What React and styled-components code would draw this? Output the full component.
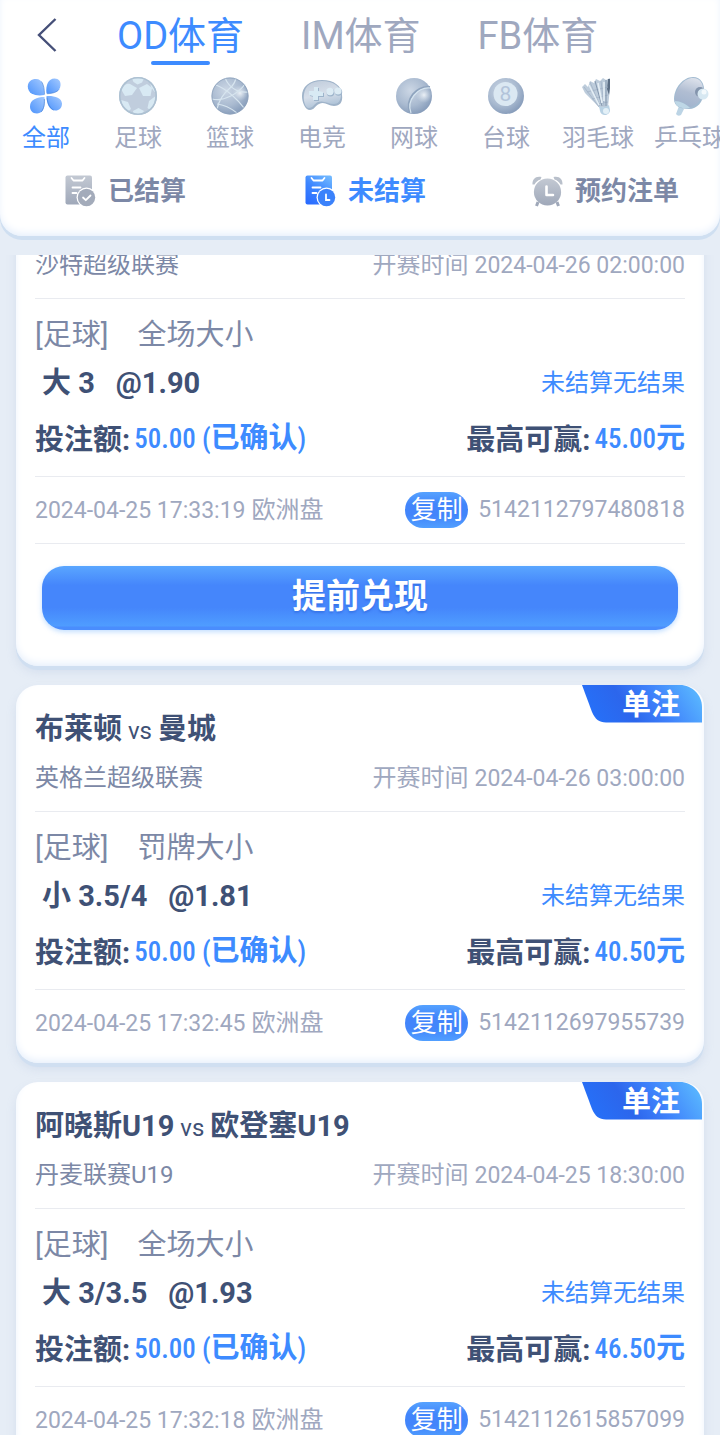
import React, { useLayoutEffect, useRef, useState } from 'react';
import styled, { createGlobalStyle } from 'styled-components';

const GlobalStyle = createGlobalStyle`
  * {
    box-sizing: border-box;
  }

  body {
    margin: 0;
    background-color: #e6edf6;
    font-family: Roboto, 'Noto Sans CJK SC', sans-serif;
    line-height: 40px;
  }

  button {
    font-family: inherit;
    border: none;
    padding: 0;
    background: none;
    cursor: pointer;
  }
`;

const Page = styled.div`
  display: flex;
  flex-direction: column;
  height: 100vh;
`;

const Header = styled.header`
  flex: none;
  padding-bottom: 20px;
  background-color: #fff;
  border-radius: 0 0 22px 22px;
  box-shadow: 0 4px 0 #cfdff1, inset 0 -4px 8px -2px #e3edfb;
`;

const TopBar = styled.div`
  display: flex;
  align-items: center;
  height: 72px;
`;

const BackButton = styled.button`
  display: flex;
  justify-content: center;
  width: 62px;
  margin: 0 22px 0 16px;
`;

const Providers = styled.nav`
  display: flex;
  gap: 57px;
  padding-left: 17px;
`;

const ProviderTab = styled.button`
  display: flex;
  flex-direction: column;
  align-items: center;
  padding-top: 2px;
  color: ${props => props.$active ? '#3d8bff' : '#9fa8bf'};
  font-size: 38px;
  line-height: 54px;
  white-space: nowrap;

  &::after {
    content: '';
    width: 59px;
    height: 4px;
    margin-top: -2px;
    border-radius: 2px;
    background-color: ${props => props.$active ? '#3d8bff' : 'transparent'};
  }
`;

const Sports = styled.nav`
  display: flex;
  overflow: hidden;
`;

const SportTab = styled.button`
  display: flex;
  flex: none;
  flex-direction: column;
  align-items: center;
  width: 92px;
  padding-top: 3px;
  color: ${props => props.$active ? '#3d8bff' : '#9fa8bf'};
  font-size: 24px;
  line-height: 42px;
  white-space: nowrap;
`;

const Statuses = styled.nav`
  display: grid;
  grid-template-columns: repeat(3, 1fr);
  margin-top: 7px;
`;

const StatusTab = styled.button`
  display: flex;
  align-items: center;
  justify-content: center;
  gap: 12px;
  height: 50px;
  padding-left: 11px;
  color: ${props => props.$active ? '#3d8bff' : '#7c88a6'};
  font-size: 26px;
  font-weight: 700;
  line-height: 42px;
`;

const BetList = styled.main`
  display: flex;
  flex: 1;
  flex-direction: column;
  gap: 19px;
  min-height: 0;
  margin-top: 19px;
  padding: 0 16px;
  overflow-y: auto;
  scrollbar-width: none;

  &::after {
    content: '';
    flex: none;
    height: 1px;
  }
`;

const Card = styled.article`
  position: relative;
  flex: none;
  padding: 18px 19px ${props => props.$cashOut ? '36px' : '7px'};
  background-color: #fff;
  border-radius: 22px;
  box-shadow: 0 4px 0 #d0dff1, 0 6px 10px rgba(160, 180, 215, 0.25), inset 0 -4px 8px -2px #e3edfb;
`;

const Ribbon = styled.div`
  position: absolute;
  top: 0;
  right: 2px;
  width: 120px;
  height: 38px;
  padding-left: 18px;
  color: #fff;
  font-size: 29px;
  font-weight: 700;
  text-align: center;

  svg {
    position: absolute;
    top: 0;
    left: 0;
  }

  span {
    position: relative;
  }
`;

const Section = styled.section`
  padding: ${props => props.$top || '0'} 0 ${props => props.$bottom || '0'};
  border-bottom: ${props => props.$last ? 'none' : '1px solid #e9ebf0'};
`;

const Row = styled.div`
  display: flex;
  align-items: center;
  justify-content: space-between;
  height: ${props => props.$height || '50px'};
  white-space: nowrap;
`;

const Teams = styled.h2`
  margin: 0;
  padding-top: 4px;
  color: #3f5175;
  font-size: 29px;
  font-weight: 700;

  small {
    font-size: 24px;
    font-weight: 400;
  }
`;

const League = styled.span`
  color: #7c88a6;
  font-size: 24px;
`;

const Muted = styled.span`
  color: #9fa8bf;
  font-size: 24px;

  time {
    font-size: 23px;
  }
`;

const OrderNumber = styled.span`
  color: #9fa8bf;
  font-size: 23px;
`;

const Market = styled.div`
  display: flex;
  gap: 29px;
  padding-top: 2px;
  color: #7c88a6;
  font-size: 29px;
`;

const Pick = styled.div`
  display: flex;
  gap: 21px;
  padding-left: 7px;
  color: #3f5175;
  font-size: 29px;
  font-weight: 700;
`;

const Result = styled.span`
  color: #3d8bff;
  font-size: 24px;
`;

const Money = styled.div`
  display: flex;
  align-items: center;
  gap: 4px;
  padding-top: 4px;
  color: #3f5175;
  font-size: 29px;
  font-weight: 700;

  strong {
    padding-bottom: 4px;
    color: #3d8bff;
    font-family: 'Roboto Condensed', 'Noto Sans CJK SC', sans-serif;
    font-size: 27px;
    font-weight: 500;
  }

  b {
    font-size: 29px;
    font-weight: 700;
  }
`;

const Order = styled.div`
  display: flex;
  align-items: center;
  gap: 10px;
`;

const CopyButton = styled.button`
  width: 63px;
  height: 36px;
  border-radius: 18px;
  background: linear-gradient(#55a2ff, #4285fb 35%, #4285fb 65%, #519fff);
  color: #fff;
  font-size: 26px;
  line-height: 36px;
`;

const CashOutButton = styled.button`
  display: block;
  width: calc(100% - 14px);
  height: 64px;
  margin: 22px 7px 0;
  padding-bottom: 4px;
  border-radius: 22px;
  background: linear-gradient(#5aa6ff, #4586fb 30%, #4586fb 65%, #4f9dff 94%, #4a8dfd 95%);
  box-shadow: 0 2px 5px rgba(80, 160, 255, 0.35);
  color: #fff;
  font-size: 34px;
  font-weight: 700;
  line-height: 60px;
  text-shadow: 0 2px 2px rgba(30, 80, 200, 0.35);
`;

const Gradients = () => (
  <svg width="0" height="0" style={{ position: 'absolute' }} aria-hidden="true">
    <defs>
      <linearGradient id="petal" x1="1" y1="0" x2="0" y2="1">
        <stop offset="0" stopColor="#a6cbff" />
        <stop offset="1" stopColor="#4b92fb" />
      </linearGradient>
      <radialGradient id="ball" cx="0.4" cy="0.35" r="0.7">
        <stop offset="0" stopColor="#ccd7e5" />
        <stop offset="0.6" stopColor="#a9bad0" />
        <stop offset="1" stopColor="#8399b8" />
      </radialGradient>
      <radialGradient id="shine" cx="0.5" cy="0.5" r="0.5">
        <stop offset="0" stopColor="#f2f6fa" stopOpacity="0.9" />
        <stop offset="1" stopColor="#d6e0eb" stopOpacity="0" />
      </radialGradient>
      <linearGradient id="body" x1="0.3" y1="0" x2="0.6" y2="1">
        <stop offset="0" stopColor="#c2cedd" />
        <stop offset="0.5" stopColor="#d7dfea" />
        <stop offset="1" stopColor="#a9bfd5" />
      </linearGradient>
      <linearGradient id="paddle" x1="0.6" y1="0" x2="0.3" y2="1">
        <stop offset="0" stopColor="#dbe0ea" />
        <stop offset="0.5" stopColor="#b0bdd2" />
        <stop offset="1" stopColor="#a0b3cd" />
      </linearGradient>
      <linearGradient id="gray" x1="0" y1="0" x2="0" y2="1">
        <stop offset="0" stopColor="#c3c9d3" />
        <stop offset="1" stopColor="#9fa8b9" />
      </linearGradient>
      <linearGradient id="blue" x1="0.8" y1="0" x2="0.2" y2="1">
        <stop offset="0" stopColor="#6fb7ff" />
        <stop offset="0.5" stopColor="#3d86ff" />
        <stop offset="1" stopColor="#2a6cff" />
      </linearGradient>
      <linearGradient id="ribbon" x1="0" y1="0.4" x2="1" y2="0.2">
        <stop offset="0" stopColor="#2670f8" />
        <stop offset="0.32" stopColor="#2c66ec" />
        <stop offset="0.6" stopColor="#3f82fb" />
        <stop offset="1" stopColor="#5bbaff" />
      </linearGradient>
    </defs>
  </svg>
);

const sportDrawings = {
  all: (
    <g fill="url(#petal)">
      <path d="M19.3 20C12 21.500 2.800 19.500 2.800 11.500C2.800 6.500 6.500 4 11 4C17.500 4 19.300 11 19.300 20Z" />
      <path d="M21.500 18.500C20.500 10 23.500 3.500 29.500 3.500C34 3.500 36 6.500 35.500 10.500C35 17 28 18.500 21.500 18.500Z" />
      <path d="M19.500 22C20.500 30 19 38.500 12 38.500C7 38.500 5 35 5 31.500C5 24.500 12 22 19.500 22Z" />
      <path d="M21.500 21C29 20.500 36.500 22.500 37 28.500C37 33 34 35.500 30.500 35.500C24 35.500 21.500 28 21.500 21Z" />
      <path d="M19.500 19.500C19.500 14 18.500 9.500 16.500 6.500M22 18.700C28 18.500 32 17 34 14.500M19.300 24C19.800 31 18 35 16 37M22 22.500C22.500 29 25.500 33.500 28.500 35" fill="none" stroke="#3c78cf" strokeWidth="0.600" />
    </g>
  ),
  football: (
    <g>
      <circle cx="21" cy="21" r="19" fill="#c0cddd" />
      <g fill="#d8e9f3">
        <path d="M13 9L20 13L15 20L8 21L4.500 15C6 11 9 8 13 9Z" />
        <path d="M22 13L30 9L35 13L33.500 21L26 21Z" />
        <path d="M15 3.500Q21 1.500 27 3.500L25 7.500L20.500 9.500L16.500 7Z" />
        <path d="M4 25L11 27L14 34L11 36.500Q5 32 4 25Z" />
        <path d="M38 21.500L32 26L30.500 33L33 35Q38.500 29 38 21.500Z" />
        <path d="M16 36L21.500 33L27 36L25 39Q20 40 16.500 38.500Z" />
        <path d="M33 6.500Q38 11 39.500 17L37.500 17L34 12Z" />
      </g>
      <circle cx="21" cy="21" r="18.200" fill="none" stroke="#adc1d2" strokeWidth="1.600" />
    </g>
  ),
  basketball: (
    <g>
      <circle cx="21" cy="21" r="18.500" fill="url(#ball)" />
      <circle cx="31" cy="18" r="8" fill="url(#shine)" />
      <path d="M7 10C18 14 29 25 35 33M3 24C15 27 30 18 36 9M16 3C20 12 28 18 39 17M8 34C10 25 15 18 21 13C25 10 26 7 27 3M8 29Q18 30 28 38" fill="none" stroke="#d7e5ef" strokeWidth="1.200" />
      <circle cx="21" cy="21" r="18" fill="none" stroke="#8fa3bd" strokeWidth="0.800" />
    </g>
  ),
  esports: (
    <g>
      <path d="M1 21C1 12 8 5 21 5C33 5 41 11 41 20C42 27 39 31 33 31C27 31 24 26 18 29C14 31 13 35 9 35C4 35 1 27 1 21Z" fill="#9fb3c9" />
      <path d="M3 19C4 11 10 6 21 6C32 6 39 11 40 19C40 26 37 29 33 29C27 29 23 25 17 27C13 29 12 33 8 33C4 33 2 25 3 19Z" fill="url(#body)" />
      <path d="M14 13H18V17L23 18V22L18 22V26H13V22L9 21V17H14Z" fill="#9db4cb" />
      <path d="M13 12H17V16L22 17V21L17 21V25H12V21L8 20V16H13Z" fill="#d8eaf4" />
      <circle cx="29.500" cy="17.500" r="3.900" fill="#9db4cb" />
      <circle cx="29" cy="16.500" r="3.700" fill="#dcebf4" />
      <circle cx="37.500" cy="17" r="3.700" fill="#9db4cb" />
      <circle cx="37" cy="16" r="3.500" fill="#dcebf4" />
    </g>
  ),
  tennis: (
    <g>
      <circle cx="21" cy="21" r="18" fill="url(#ball)" />
      <circle cx="31" cy="20" r="8" fill="url(#shine)" />
      <path d="M37 12C23 11 12 24 17 38" fill="none" stroke="#8fa4be" strokeWidth="2" />
      <path d="M37 13C25 12 13 25 18 38" fill="none" stroke="#d5e4ef" strokeWidth="1.200" />
    </g>
  ),
  billiards: (
    <g>
      <circle cx="21" cy="21" r="18" fill="url(#ball)" />
      <circle cx="20.500" cy="19" r="12" fill="#dbe8f2" />
      <text x="20.500" y="26" fill="#b3c4da" fontSize="21" fontWeight="400" textAnchor="middle">8</text>
    </g>
  ),
  badminton: (
    <g>
      <path d="M5 12L8 9L11 12L13 6L17 8L19 4L23 6L26 3L29 5L33 3V13L31 32L23 33L8 18Z" fill="#bdccdb" />
      <path d="M31 4H33V13L32 20L30 14Z" fill="#5c6e84" />
      <path d="M13 7L23 31M24 6L27 31M7 12L22 32M10 17L31 12M15 24L31 20M20 29L31 27" stroke="#a2b3c6" strokeWidth="0.800" fill="none" />
      <path d="M18 6L25 31M29 5L29 31" stroke="#7d91a8" strokeWidth="0.900" fill="none" />
      <path d="M12 10L22 30M21 8L25 28M27 7L27 26" stroke="#e4eef5" strokeWidth="1.600" fill="none" />
      <path d="M22 31Q27 34 32 30L33 35C33 41 24 42 23 36Z" fill="#b9d2e4" />
      <circle cx="29" cy="36" r="3" fill="#e3f0f7" />
    </g>
  ),
  pingpong: (
    <g>
      <path d="M10 31L15 34L12 40Q9 42 7 39Z" fill="#bcd4e5" />
      <path d="M5 24C5 13 14 2 24 2C32 2 36 9 35 18C34 27 28 34 20 34C11 34 5 31 5 24Z" fill="#a2bbd1" />
      <path d="M6 23C7 13 15 3 24 3C31 3 35 9 34 17C33 25 27 31 21 32C16 28 11 26 6 26Z" fill="url(#paddle)" />
      <path d="M6 26C11 26 17 29 21 33C13 34 6 32 6 26Z" fill="#bed7e6" />
      <circle cx="31" cy="17" r="5" fill="#8495ad" />
      <circle cx="34" cy="19" r="5.500" fill="#d7e8f2" />
      <circle cx="35" cy="17" r="2.500" fill="#f3f9fc" />
    </g>
  ),
};

const SportIcon = ({ name }) => (
  <svg width="42" height="42" viewBox="0 0 42 42" aria-hidden="true">
    {sportDrawings[name]}
  </svg>
);

const Clipboard = ({ fill, badge, children }) => (
  <svg width="31" height="32" viewBox="0 0 31 32" aria-hidden="true">
    <rect x="0.500" y="0.500" width="26.500" height="29" rx="2" fill={fill} />
    <path d="M6.500 3L8.500 5.500H17.500L19.500 3M7.500 12.500H15.500M7.500 18H11.500" fill="none" stroke="#fff" strokeWidth="1.800" strokeLinecap="round" strokeLinejoin="round" />
    <circle cx="21.500" cy="22.500" r="10" fill="#fff" />
    <circle cx="21.500" cy="22.500" r="8.700" fill={badge} />
    {children}
  </svg>
);

const statusDrawings = {
  settled: (
    <Clipboard fill="url(#gray)" badge="#a3abba">
      <path d="M18 22.500L20.800 25.200L25.500 20.500" fill="none" stroke="#fff" strokeWidth="1.800" strokeLinecap="round" strokeLinejoin="round" />
    </Clipboard>
  ),
  pending: (
    <Clipboard fill="url(#blue)" badge="#3b82fb">
      <path d="M21 19.500V25H24.500" fill="none" stroke="#fff" strokeWidth="1.800" strokeLinecap="round" />
    </Clipboard>
  ),
  reserved: (
    <svg width="31" height="32" viewBox="0 0 31 32" aria-hidden="true">
      <path d="M0.500 9.500C0 4 4 0.500 9.500 2L8.500 4.500C5.500 5.500 4 7 2.500 9.500Z" fill="#b9c0cb" />
      <path d="M30.500 9.500C31 4 27 0.500 21.500 2L22.500 4.500C25.500 5.500 27 7 28.500 9.500Z" fill="#b9c0cb" />
      <path d="M6 27L4.500 31M25 27L26.500 31" stroke="#9fa8b9" strokeWidth="3" />
      <circle cx="15.500" cy="17" r="13.600" fill="url(#gray)" />
      <path d="M14.500 11.500V20H21" fill="none" stroke="#fff" strokeWidth="2.600" strokeLinecap="round" strokeLinejoin="round" />
    </svg>
  ),
};

const providers = ['OD体育', 'IM体育', 'FB体育'];

const sports = [
  { id: 'all', label: '全部' },
  { id: 'football', label: '足球' },
  { id: 'basketball', label: '篮球' },
  { id: 'esports', label: '电竞' },
  { id: 'tennis', label: '网球' },
  { id: 'billiards', label: '台球' },
  { id: 'badminton', label: '羽毛球' },
  { id: 'pingpong', label: '乒乓球' },
];

const statuses = [
  { id: 'settled', label: '已结算' },
  { id: 'pending', label: '未结算' },
  { id: 'reserved', label: '预约注单' },
];

const bets = [
  {
    order: '5142112797480818',
    league: '沙特超级联赛',
    start: '2024-04-26 02:00:00',
    market: '全场大小',
    pick: '大 3',
    odds: '1.90',
    win: '45.00',
    placed: '2024-04-25 17:33:19',
    cashOut: true,
  },
  {
    order: '5142112697955739',
    home: '布莱顿',
    away: '曼城',
    league: '英格兰超级联赛',
    start: '2024-04-26 03:00:00',
    market: '罚牌大小',
    pick: '小 3.5/4',
    odds: '1.81',
    win: '40.50',
    placed: '2024-04-25 17:32:45',
  },
  {
    order: '5142112615857099',
    home: '阿晓斯U19',
    away: '欧登塞U19',
    league: '丹麦联赛U19',
    start: '2024-04-25 18:30:00',
    market: '全场大小',
    pick: '大 3/3.5',
    odds: '1.93',
    win: '46.50',
    placed: '2024-04-25 17:32:18',
  },
];

const BetCard = ({ bet }) => (
  <Card $cashOut={bet.cashOut}>
    {bet.home && (
      <Ribbon>
        <svg width="120" height="38" viewBox="0 0 120 38" aria-hidden="true">
          <path d="M0 0H98C110 0 120 10 120 22V37.500H24C17 37.500 13 34 10 27Z" fill="url(#ribbon)" />
        </svg>
        <span>单注</span>
      </Ribbon>
    )}
    <Section $bottom="8px">
      <Row>
        {bet.home && <Teams>{bet.home}<small> vs </small>{bet.away}</Teams>}
      </Row>
      <Row>
        <League>{bet.league}</League>
        <Muted>开赛时间 <time>{bet.start}</time></Muted>
      </Row>
    </Section>
    <Section $top="11px" $bottom="8px">
      <Row $height="48px">
        <Market>
          <span>[足球]</span>
          <span>{bet.market}</span>
        </Market>
      </Row>
      <Row>
        <Pick>
          <span>{bet.pick}</span>
          <span>@{bet.odds}</span>
        </Pick>
        <Result>未结算无结果</Result>
      </Row>
      <Row $height="60px">
        <Money>投注额:<strong>50.00 (<b>已确认</b>)</strong></Money>
        <Money>最高可赢:<strong>{bet.win}<b>元</b></strong></Money>
      </Row>
    </Section>
    <Section $last={!bet.cashOut}>
      <Row $height="66px">
        <Muted><time>{bet.placed}</time> 欧洲盘</Muted>
        <Order>
          <CopyButton type="button">复制</CopyButton>
          <OrderNumber>{bet.order}</OrderNumber>
        </Order>
      </Row>
    </Section>
    {bet.cashOut && <CashOutButton type="button">提前兑现</CashOutButton>}
  </Card>
);

const App = () => {
  const [provider, setProvider] = useState('OD体育');
  const [sport, setSport] = useState('all');
  const [status, setStatus] = useState('pending');
  const listRef = useRef(null);

  useLayoutEffect(() => {
    listRef.current.scrollTop = 83;
  }, []);

  return (
    <Page>
      <GlobalStyle />
      <Gradients />
      <Header>
        <TopBar>
          <BackButton type="button" aria-label="返回">
            <svg width="20" height="36" viewBox="0 0 20 36" aria-hidden="true">
              <path d="M18.500 1L2 17L18.500 33" fill="none" stroke="#454f78" strokeWidth="2.400" />
            </svg>
          </BackButton>
          <Providers>
            {providers.map(name => (
              <ProviderTab key={name} type="button" $active={name === provider} onClick={() => setProvider(name)}>
                {name}
              </ProviderTab>
            ))}
          </Providers>
        </TopBar>
        <Sports>
          {sports.map(({ id, label }) => (
            <SportTab key={id} type="button" $active={id === sport} onClick={() => setSport(id)}>
              <SportIcon name={id} />
              {label}
            </SportTab>
          ))}
        </Sports>
        <Statuses>
          {statuses.map(({ id, label }) => (
            <StatusTab key={id} type="button" $active={id === status} onClick={() => setStatus(id)}>
              {statusDrawings[id]}
              {label}
            </StatusTab>
          ))}
        </Statuses>
      </Header>
      <BetList ref={listRef}>
        {bets.map(bet => <BetCard key={bet.order} bet={bet} />)}
      </BetList>
    </Page>
  );
};

export default App;
